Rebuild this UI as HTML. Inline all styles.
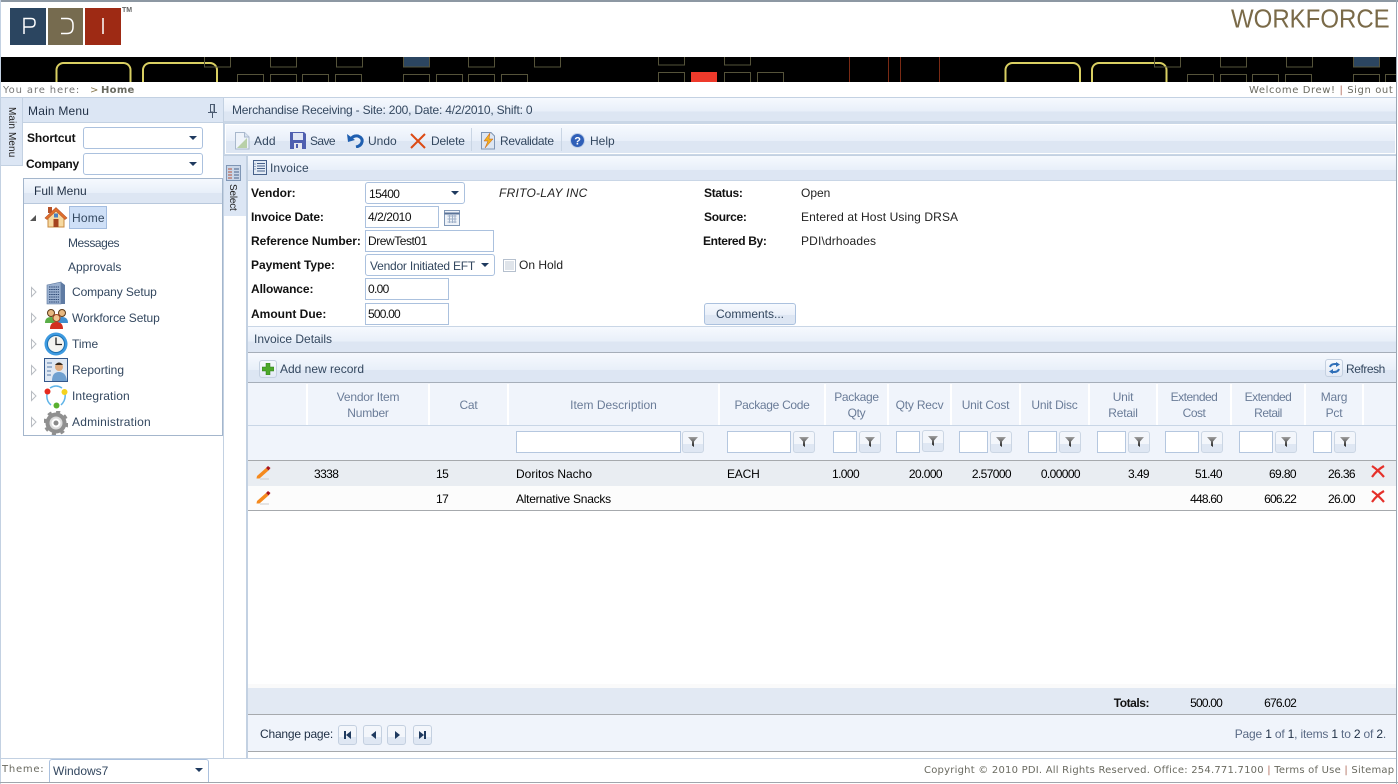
<!DOCTYPE html>
<html><head><meta charset="utf-8"><title>Merchandise Receiving</title>
<style>
html,body{margin:0;padding:0;background:#fff}
body{width:1398px;height:784px;position:relative;overflow:hidden;font:12px/16px "Liberation Sans",sans-serif;color:#000}
div,svg,span.a{position:absolute}
.t{position:absolute;white-space:nowrap;line-height:16px;height:16px}
.b{font-weight:bold;color:#111}
.n{color:#33475f}
.g{color:#5a6a85}
.r{text-align:right}
.m{letter-spacing:-.6px}
.c{text-align:center;color:#6a7c98;line-height:16px;letter-spacing:-.2px}
.bar{background:linear-gradient(#f6f9fe 0,#e8eff9 58%,#dde6f3 58%,#dde6f3 100%)}
.inp{background:#fff;border:1px solid #abc1de;box-sizing:border-box;padding-left:2px;line-height:21px;color:#111;letter-spacing:-.45px}
.sel{background:#fff;border:1px solid #abc1de;border-radius:3px;box-sizing:border-box;padding-left:3px;line-height:22px;color:#33475f}
.sel:after{content:"";position:absolute;right:5px;top:8px;border:4px solid transparent;border-top:4px solid #1f3a5f;border-bottom:0}
.fi{background:#fff;border:1px solid #b5c7df;box-sizing:border-box;height:22px;top:431px}
.fb{border:1px solid #cbd6e4;border-radius:3px;box-sizing:border-box;height:22px;width:22px;top:431px;background:linear-gradient(#f3f6fb 0,#f3f6fb 60%,#dfe7f3 60%)}
.fb:after{content:"";position:absolute;left:5px;top:5px;width:10px;height:10px;background:linear-gradient(#a0a0a0,#222);clip-path:polygon(0 0,100% 0,60% 45%,60% 100%,40% 85%,40% 45%)}
.pb{border:1px solid #c4d0e0;border-radius:3px;box-sizing:border-box;top:725px;height:20px;background:linear-gradient(#f3f6fb 0,#f3f6fb 60%,#dfe7f3 60%)}
.vh{width:2px;top:384px;height:41px;background:#fff}
</style></head><body>

<!-- frame -->
<div style="left:0;top:0;width:1398px;height:2px;background:#8d98a3"></div>
<div style="left:0;top:0;width:1px;height:784px;background:#c3d1e2"></div>
<div style="left:1396px;top:0;width:1px;height:784px;background:#9aa7b5"></div>

<!-- logo -->
<div style="left:10px;top:8px;width:36px;height:37px;background:#2b4560"></div>
<div style="left:48px;top:8px;width:35px;height:37px;background:#766b4f"></div>
<div style="left:85px;top:8px;width:36px;height:37px;background:#9e2a14"></div>
<svg style="left:10px;top:8px" width="111" height="37" fill="none" stroke="#fff" stroke-width="1.500">
<path d="M14 26V10.500H21Q25 10.500 25 14V15Q25 19 21 19H14"/>
<path d="M51 10.500H57Q63 10.500 63 17V19Q63 25.500 57 25.500H51"/>
<path d="M93 10V26"/></svg>
<div class="t" style="left:122px;top:6px;font-size:7px;line-height:9px;height:9px;font-weight:bold;color:#666">TM</div>
<div class="t" style="left:1231px;top:5px;font-size:24px;line-height:28px;height:28px;color:#7a6a48;transform-origin:0 14px;transform:scaleY(1.08) translateY(1px)">WORKFORCE</div>

<!-- banner -->
<svg style="left:1px;top:57px" width="1395" height="25" viewBox="1 57 1395 25">
<rect x="1" y="57" width="1395" height="25" fill="#000"/>
<g fill="none" stroke="#d9cf62" stroke-width="2">
<rect x="56.500" y="63" width="74" height="30" rx="7"/><rect x="143" y="63" width="74" height="30" rx="7"/>
<rect x="1005.500" y="63" width="74.500" height="30" rx="7"/><rect x="1092" y="63" width="74.500" height="30" rx="7"/></g>
<g fill="none" stroke="#55533a">
<rect x="204.500" y="50" width="26" height="17"/><rect x="270.500" y="50" width="26" height="17"/><rect x="336.500" y="50" width="26" height="17"/>
<rect x="237.500" y="74.500" width="26" height="20"/><rect x="270.500" y="74.500" width="26" height="20"/><rect x="302.500" y="74.500" width="26" height="20"/><rect x="335.500" y="74.500" width="26" height="20"/>
<rect x="403.500" y="74.500" width="26" height="20"/><rect x="436.500" y="74.500" width="26" height="20"/>
<rect x="468.500" y="74.500" width="26" height="20"/><rect x="501.500" y="74.500" width="26" height="20"/>
<rect x="468.500" y="50" width="26" height="17"/><rect x="534.500" y="50" width="26" height="17"/>
<rect x="658.500" y="50" width="26" height="15"/><rect x="724.500" y="50" width="26" height="15"/>
<rect x="658.500" y="72.500" width="26" height="20"/><rect x="724.500" y="72.500" width="26" height="20"/><rect x="757.500" y="72.500" width="26" height="20"/>
<rect x="1154.500" y="50" width="26" height="17"/><rect x="1220.500" y="50" width="26" height="17"/><rect x="1286.500" y="50" width="26" height="17"/>
<rect x="1187.500" y="74.500" width="26" height="20"/><rect x="1220.500" y="74.500" width="26" height="20"/><rect x="1252.500" y="74.500" width="26" height="20"/><rect x="1285.500" y="74.500" width="26" height="20"/>
<rect x="1353.500" y="74.500" width="26" height="20"/><rect x="1385.500" y="74.500" width="26" height="20"/>
</g>
<rect x="403.500" y="50" width="26" height="17" fill="#2b4560" stroke="#55533a"/>
<rect x="1353.500" y="50" width="26" height="17" fill="#2b4560" stroke="#55533a"/>
<rect x="691" y="72" width="26" height="12" fill="#ee3a2b"/>
<g stroke="#7a2a14"><path d="M849.500 57V82M888.500 57V82M900.500 57V82M939.500 57V82"/></g>
</svg>

<!-- breadcrumb -->
<div class="t" style="left:3px;top:83px;font:10px/15px 'DejaVu Sans',sans-serif;color:#777;letter-spacing:.88px">You are here:</div>
<div class="t" style="left:90px;top:83px;font:10px/15px 'DejaVu Sans',sans-serif;color:#8a7a50">&gt;</div>
<div class="t" style="left:101px;top:83px;font:bold 10px/15px 'DejaVu Sans',sans-serif;color:#6a6a60;letter-spacing:.3px">Home</div>
<div class="t" style="left:1249px;top:83px;font:10px/15px 'DejaVu Sans',sans-serif;color:#6a6a60;letter-spacing:.6px">Welcome Drew! <span style="color:#b06a5a">|</span> Sign out</div>
<div style="left:1px;top:97px;width:1395px;height:1px;background:#c3d1e2"></div>

<!-- left rail -->
<div style="left:1px;top:98px;width:21px;height:67px;background:#dce6f4;border-right:1px solid #c3d1e2;border-bottom:1px solid #c3d1e2"></div>
<div class="t" style="left:18px;top:107px;transform-origin:0 0;transform:rotate(90deg);font-size:10px;line-height:14px;color:#222;letter-spacing:.1px">Main Menu</div>
<div style="left:23px;top:98px;width:200px;height:25px;background:#dce6f4;border-bottom:1px solid #c3d1e2;box-sizing:border-box"></div>
<div class="t" style="left:28px;top:103px;color:#1f2f45;letter-spacing:.2px">Main Menu</div>
<svg style="left:207px;top:104px" width="11" height="14" fill="none" stroke="#4a5a70"><path d="M3.500 .5H7.500V8H3.500ZM1 8.500H10M5.500 9V14"/><path d="M6.500 1V8" stroke="#9aa8b8"/></svg>
<div class="t b" style="left:27px;top:130px;letter-spacing:-.1px">Shortcut</div>
<div class="sel" style="left:83px;top:127px;width:120px;height:22px"></div>
<div class="t b" style="left:26px;top:156px;letter-spacing:-.25px">Company</div>
<div class="sel" style="left:83px;top:153px;width:120px;height:22px"></div>

<!-- Full menu -->
<div style="left:23px;top:178px;width:200px;height:258px;border:1px solid #a4b6cc;box-sizing:border-box;background:#fff"></div>
<div class="bar" style="left:24px;top:179px;width:198px;height:25px;border-bottom:1px solid #b8c8dc;box-sizing:border-box"></div>
<div class="t" style="left:34px;top:183px;color:#1f2f45">Full Menu</div>
<svg style="left:29px;top:214px" width="8" height="8"><path d="M7 1V7H1Z" fill="#555"/></svg>
<div style="left:69px;top:206px;width:38px;height:23px;background:#cfe0f7;border:1px solid #a3bcdf;box-sizing:border-box"></div>
<div class="t n" style="left:72px;top:210px;letter-spacing:.2px">Home</div>
<div class="t n" style="left:68px;top:235px;letter-spacing:-.45px">Messages</div>
<div class="t n" style="left:68px;top:259px">Approvals</div>
<div class="t n" style="left:72px;top:284px;letter-spacing:-.1px">Company Setup</div>
<div class="t n" style="left:72px;top:310px;letter-spacing:-.1px">Workforce Setup</div>
<div class="t n" style="left:72px;top:336px">Time</div>
<div class="t n" style="left:72px;top:362px">Reporting</div>
<div class="t n" style="left:72px;top:388px;letter-spacing:.1px">Integration</div>
<div class="t n" style="left:72px;top:414px;letter-spacing:.2px">Administration</div>
<svg style="left:30px;top:285px" width="8" height="150" fill="#fff" stroke="#b8bcc2"><path d="M1.500 2.500L6 7L1.500 11.500Z"/><path d="M1.500 28.500L6 33L1.500 37.500Z"/><path d="M1.500 54.500L6 59L1.500 63.500Z"/><path d="M1.500 80.500L6 85L1.500 89.500Z"/><path d="M1.500 106.500L6 111L1.500 115.500Z"/><path d="M1.500 132.500L6 137L1.500 141.500Z"/></svg>

<!-- tree icons -->
<svg style="left:44px;top:206px" width="24" height="23" viewBox="0 0 24 23"><rect x="4" y="1" width="4" height="6" fill="#b5532a"/><path d="M4 11L12 4L20 11V21H4Z" fill="#f6d9a0" stroke="#c88a40"/><path d="M1 12L12 1.500L23 12L21 13.500L12 5L3 13.500Z" fill="#e2702a" stroke="#b5532a" stroke-width=".6"/><rect x="9.500" y="13" width="5" height="8" fill="#a5431e"/><rect x="10" y="7.500" width="4" height="4" fill="#4a82c4"/></svg>
<svg style="left:46px;top:281px" width="20" height="24" viewBox="0 0 20 24"><path d="M1 4L15 1V23H1Z" fill="#9ab0cf" stroke="#56729a" stroke-width=".6"/><path d="M15 1L19 4V23H15Z" fill="#5f7ba3"/><path d="M3 6H13M3 8.500H13M3 11H13M3 13.500H13M3 16H13M3 18.500H13M3 21H13" stroke="#2f4a75" stroke-dasharray="1.500 .7"/></svg>
<svg style="left:44px;top:308px" width="25" height="21" viewBox="0 0 25 21"><circle cx="7" cy="5" r="3.500" fill="#e8b880" stroke="#5a3a1a"/><path d="M1 15Q1 9 7 9Q12 9 12 15Z" fill="#5aae48"/><circle cx="18" cy="5" r="3.500" fill="#e8b880" stroke="#5a3a1a"/><path d="M13 15Q13 9 18 9Q24 9 24 15Z" fill="#3f8fd0"/><circle cx="12.500" cy="10" r="3.500" fill="#f0c490" stroke="#a5431e"/><path d="M6 21Q6 14 12.500 14Q19 14 19 21Z" fill="#d32f1e"/></svg>
<svg style="left:44px;top:332px" width="24" height="24" viewBox="0 0 24 24"><circle cx="12" cy="12" r="11.500" fill="#3d9ae0"/><circle cx="12" cy="12" r="8.500" fill="#f4f4f0" stroke="#1b6fb0"/><path d="M12 5.500V12.500H18" stroke="#222" stroke-width="1.300" fill="none"/></svg>
<svg style="left:44px;top:358px" width="24" height="24" viewBox="0 0 24 24"><rect x=".5" y=".5" width="23" height="23" fill="#dfe8f3" stroke="#33578a"/><path d="M3 5H8M3 9H8M3 13H7M3 17H7" stroke="#5a7ba8"/><circle cx="15" cy="9" r="4" fill="#e0ac80"/><path d="M11 7Q15 2 19 7Z" fill="#3a2a1a"/><path d="M8 23Q8 14 15 14Q22 14 23 23Z" fill="#6fa0d0"/></svg>
<svg style="left:44px;top:384px" width="24" height="25" viewBox="0 0 24 25"><path d="M6 4Q12 0 18 4M21 10Q22 16 17 21M7 21Q2 17 3 10" fill="none" stroke="#5fb4e8" stroke-width="1.500"/><circle cx="3.500" cy="7.500" r="3" fill="#e62a1e"/><circle cx="20.500" cy="8" r="3" fill="#f4d21e"/><circle cx="12.500" cy="21.500" r="3" fill="#5ab030"/></svg>
<svg style="left:44px;top:411px" width="24" height="24" viewBox="0 0 24 24"><circle cx="12" cy="12" r="8" fill="none" stroke="#8f8f8f" stroke-width="5"/><circle cx="12" cy="12" r="11" fill="none" stroke="#8f8f8f" stroke-width="3" stroke-dasharray="4 4.600"/><circle cx="12" cy="12" r="5.500" fill="none" stroke="#dcdcdc" stroke-width="2"/><circle cx="12" cy="12" r="2.500" fill="#8a8a8a"/></svg>

<!-- dividers -->
<div style="left:223px;top:98px;width:1px;height:660px;background:#c3d1e2"></div>
<div style="left:246px;top:156px;width:2px;height:602px;background:#c3d1e2"></div>
<div style="left:224px;top:156px;width:22px;height:60px;background:#dce6f4"></div>
<svg style="left:226px;top:165px" width="15" height="16"><rect x=".5" y=".5" width="14" height="15" fill="#c9d6e8" stroke="#7f96b5"/><path d="M2 4H6M2 7H6M2 10H6M2 13H6" stroke="#b5533a"/><path d="M8 4H13M8 7H13M8 10H13M8 13H13" stroke="#47618a"/></svg>
<div class="t" style="left:239px;top:184px;transform-origin:0 0;transform:rotate(90deg);font-size:10px;color:#222;line-height:14px;letter-spacing:-.2px">Select</div>

<!-- title -->
<div class="bar" style="left:224px;top:98px;width:1172px;height:24px;border-bottom:1px solid #c9d6e6;box-sizing:border-box"></div>
<div class="t" style="left:232px;top:102px;color:#33475f;letter-spacing:-.2px">Merchandise Receiving - Site: 200, Date: 4/2/2010, Shift: 0</div>
<!-- toolbar -->
<div style="left:224px;top:122px;width:1172px;height:33px;background:#c9d6e6"></div>
<div class="bar" style="left:225px;top:124px;width:1171px;height:30px;border:1px solid #fff;box-sizing:border-box"></div>
<svg style="left:235px;top:132px" width="15" height="18"><path d="M.5 .5H9.500L14 5V17H.5Z" fill="#eef3fa" stroke="#a8b8cc"/><path d="M2 16L12 6V16Z" fill="#b8d0a8"/><path d="M9.500 .5V5H14" fill="#d8e2f0" stroke="#a8b8cc"/></svg>
<div class="t n" style="left:254px;top:133px;letter-spacing:.1px">Add</div>
<svg style="left:290px;top:132px" width="16" height="17"><path d="M0 0H14L16 2V17H0Z" fill="#4f5fb0"/><rect x="3" y="1" width="10" height="7" fill="#dfe5f5"/><rect x="4" y="11" width="8" height="6" fill="#e8e8f0"/><rect x="6" y="12" width="2" height="4" fill="#4f5fb0"/></svg>
<div class="t n" style="left:310px;top:133px;letter-spacing:-.6px">Save</div>
<svg style="left:347px;top:133px" width="17" height="15" fill="none"><path d="M3 7Q6 2 11 3Q16 5 15 9Q14 13 9 14" stroke="#1f5fb0" stroke-width="3"/><path d="M0 1L1 9L8 7Z" fill="#1f5fb0"/></svg>
<div class="t n" style="left:368px;top:133px">Undo</div>
<svg style="left:410px;top:133px" width="16" height="16" stroke="#dc4a14" stroke-width="2"><path d="M1 1L15 15M15 1L1 15"/></svg>
<div class="t n" style="left:431px;top:133px;letter-spacing:-.15px">Delete</div>
<div style="left:471px;top:128px;width:1px;height:23px;background:#c9d5e4"></div>
<svg style="left:481px;top:132px" width="14" height="18"><path d="M.5 .5H10L13.500 4V17H.5Z" fill="#dde6f2" stroke="#7f96b5"/><path d="M9 1L3 9H7L4 16L12 7H8Z" fill="#f0b020" stroke="#c85a10" stroke-width=".5"/></svg>
<div class="t n" style="left:500px;top:133px;letter-spacing:-.3px">Revalidate</div>
<div style="left:561px;top:128px;width:1px;height:23px;background:#c9d5e4"></div>
<svg style="left:570px;top:133px" width="15" height="15"><circle cx="7.500" cy="7.500" r="7" fill="#2f5fb8" stroke="#c0d0e8"/><text x="4.300" y="11.500" font-family="Liberation Sans" font-weight="bold" font-size="11" fill="#fff">?</text></svg>
<div class="t n" style="left:590px;top:133px">Help</div>

<!-- invoice bar -->
<div style="left:224px;top:155px;width:1172px;height:1px;background:#c3d1e2"></div>
<div class="bar" style="left:248px;top:156px;width:1148px;height:25px;border-bottom:1px solid #c9d6e6;box-sizing:border-box"></div>
<svg style="left:253px;top:160px" width="14" height="15" fill="none" stroke="#47618a"><rect x=".5" y=".5" width="13" height="14" fill="#e3ebf5"/><path d="M4 3.500H12M4 6H12M4 8.500H12M4 11H12"/><path d="M2 3.500V11" stroke-dasharray="1 1.500"/></svg>
<div class="t" style="left:270px;top:160px;color:#33475f;letter-spacing:.1px">Invoice</div>

<!-- form -->
<div class="t b" style="left:251px;top:185px">Vendor:</div>
<div class="t b" style="left:251px;top:209px;letter-spacing:-.15px">Invoice Date:</div>
<div class="t b" style="left:251px;top:233px;letter-spacing:-.05px">Reference Number:</div>
<div class="t b" style="left:251px;top:257px;letter-spacing:-.05px">Payment Type:</div>
<div class="t b" style="left:251px;top:281px;letter-spacing:-.1px">Allowance:</div>
<div class="t b" style="left:251px;top:306px">Amount Due:</div>
<div class="sel" style="left:365px;top:182px;width:100px;height:22px;color:#111;letter-spacing:-.6px">15400</div>
<div class="t" style="left:499px;top:185px;font-style:italic;color:#222;letter-spacing:.25px">FRITO-LAY INC</div>
<div class="inp" style="left:365px;top:206px;width:74px;height:22px">4/2/2010</div>
<svg style="left:444px;top:210px" width="16" height="16" fill="none" stroke="#7f96b5"><rect x=".5" y=".5" width="15" height="15" fill="#eef2f8"/><path d="M.5 3.500H15.500" stroke="#5a7398" stroke-width="2"/><path d="M3.500 6H12.500M3.500 9H12.500M3.500 12H12.500M5.500 5V13M8.500 5V13M11 5V13" stroke="#9fb0c8"/></svg>
<div class="inp" style="left:365px;top:230px;width:129px;height:22px">DrewTest01</div>
<div class="sel" style="left:365px;top:254px;width:130px;height:22px;letter-spacing:-.22px;padding-left:4px">Vendor Initiated EFT</div>
<div style="left:503px;top:259px;width:13px;height:13px;border:1px solid #b5c0ce;box-sizing:border-box;background:#dfe4ea;box-shadow:inset 0 0 0 1px #fff"></div>
<div class="t" style="left:519px;top:257px;color:#222">On Hold</div>
<div class="inp" style="left:365px;top:278px;width:84px;height:22px;letter-spacing:-.7px">0.00</div>
<div class="inp" style="left:365px;top:303px;width:84px;height:22px;letter-spacing:-.8px">500.00</div>
<div class="t b" style="left:704px;top:185px;letter-spacing:-.3px">Status:</div>
<div class="t b" style="left:704px;top:209px;letter-spacing:-.3px">Source:</div>
<div class="t b" style="left:703px;top:233px;letter-spacing:-.35px">Entered By:</div>
<div class="t" style="left:801px;top:185px;color:#222">Open</div>
<div class="t" style="left:801px;top:209px;color:#222;letter-spacing:.12px">Entered at Host Using DRSA</div>
<div class="t" style="left:801px;top:233px;color:#222;letter-spacing:.15px">PDI\drhoades</div>
<div style="left:704px;top:303px;width:92px;height:22px;border:1px solid #abc1de;border-radius:3px;box-sizing:border-box;background:linear-gradient(#f6f9fe 0,#eaf0f9 55%,#dde6f3 55%);text-align:center;line-height:20px;color:#33475f">Comments...</div>

<!-- details header -->
<div class="bar" style="left:248px;top:327px;width:1148px;height:25px"></div>
<div style="left:248px;top:326px;width:1148px;height:1px;background:#c9d6e6"></div>
<div class="t" style="left:254px;top:331px;color:#33475f">Invoice Details</div>
<div style="left:248px;top:352px;width:1148px;height:1px;background:#a6aeb9"></div>
<div class="bar" style="left:248px;top:353px;width:1148px;height:29px"></div>
<div style="left:259px;top:360px;width:18px;height:18px;border:1px solid #c4d0e0;border-radius:3px;box-sizing:border-box;background:linear-gradient(#f6f9fe,#e3eaf5)"></div>
<svg style="left:262px;top:363px" width="12" height="12"><path d="M4 0H8V4H12V8H8V12H4V8H0V4H4Z" fill="#4ca82a" stroke="#2f7a18" stroke-width=".5"/></svg>
<div class="t n" style="left:280px;top:361px">Add new record</div>
<div style="left:1325px;top:359px;width:18px;height:18px;border:1px solid #c4d0e0;border-radius:3px;box-sizing:border-box;background:linear-gradient(#f6f9fe,#e3eaf5)"></div>
<svg style="left:1329px;top:362px" width="11" height="12" fill="none" stroke="#2f6fb8" stroke-width="2"><path d="M1 5Q2 2 6 2H9M10 7Q9 10 5 10H2"/><path d="M7 0L11 2.500L7 5Z" fill="#2f6fb8" stroke="none"/><path d="M4 7L0 9.500L4 12Z" fill="#2f6fb8" stroke="none"/></svg>
<div class="t n" style="left:1346px;top:361px;letter-spacing:-.45px">Refresh</div>
<div style="left:248px;top:382px;width:1148px;height:1px;background:#a6aeb9"></div>

<!-- grid header -->
<div style="left:248px;top:383px;width:1148px;height:77px;background:#f0f4fb"></div>
<div style="left:248px;top:425px;width:1148px;height:1px;background:#c9d6e6"></div>
<div class="vh" style="left:306px"></div><div class="vh" style="left:428px"></div><div class="vh" style="left:507px"></div><div class="vh" style="left:718px"></div><div class="vh" style="left:824px"></div><div class="vh" style="left:887px"></div><div class="vh" style="left:950px"></div><div class="vh" style="left:1019px"></div><div class="vh" style="left:1088px"></div><div class="vh" style="left:1156px"></div><div class="vh" style="left:1230px"></div><div class="vh" style="left:1304px"></div><div class="vh" style="left:1362px"></div>
<div class="c" style="left:308px;top:389px;width:120px">Vendor Item<br>Number</div>
<div class="c" style="left:430px;top:397px;width:77px">Cat</div>
<div class="c" style="left:509px;top:397px;width:209px;letter-spacing:0">Item Description</div>
<div class="c" style="left:720px;top:397px;width:104px;letter-spacing:-.3px">Package Code</div>
<div class="c" style="left:826px;top:389px;width:61px;letter-spacing:-.3px">Package<br>Qty</div>
<div class="c" style="left:889px;top:397px;width:61px">Qty Recv</div>
<div class="c" style="left:952px;top:397px;width:67px">Unit Cost</div>
<div class="c" style="left:1021px;top:397px;width:67px">Unit Disc</div>
<div class="c" style="left:1090px;top:389px;width:66px">Unit<br>Retail</div>
<div class="c" style="left:1158px;top:389px;width:72px;letter-spacing:-.5px">Extended<br>Cost</div>
<div class="c" style="left:1232px;top:389px;width:72px;letter-spacing:-.5px">Extended<br>Retail</div>
<div class="c" style="left:1306px;top:389px;width:56px">Marg<br>Pct</div>

<!-- filters -->
<div class="fi" style="left:516px;width:165px"></div><div class="fb" style="left:682px"></div>
<div class="fi" style="left:727px;width:64px"></div><div class="fb" style="left:793px"></div>
<div class="fi" style="left:833px;width:24px"></div><div class="fb" style="left:859px"></div>
<div class="fi" style="left:896px;width:24px"></div><div class="fb" style="left:922px;top:430px"></div>
<div class="fi" style="left:959px;width:29px"></div><div class="fb" style="left:990px"></div>
<div class="fi" style="left:1028px;width:29px"></div><div class="fb" style="left:1059px"></div>
<div class="fi" style="left:1097px;width:29px"></div><div class="fb" style="left:1128px"></div>
<div class="fi" style="left:1165px;width:34px"></div><div class="fb" style="left:1201px"></div>
<div class="fi" style="left:1239px;width:34px"></div><div class="fb" style="left:1275px"></div>
<div class="fi" style="left:1313px;width:19px"></div><div class="fb" style="left:1334px"></div>

<!-- rows -->
<div style="left:248px;top:460px;width:1148px;height:1px;background:#a6a9ad"></div>
<div style="left:248px;top:461px;width:1148px;height:25px;background:#e9edf2"></div>
<div style="left:248px;top:486px;width:1148px;height:24px;background:#fcfcfc"></div>
<div style="left:248px;top:510px;width:1148px;height:1px;background:#a6a9ad"></div>
<svg style="left:256px;top:465px" width="15" height="15"><path d="M1 11L10 3L12.500 5.500L3.500 13.500L.5 13.500Z" fill="#f58a1e"/><path d="M10 3L12 1L14.500 3L12.500 5.500Z" fill="#a8141e"/><path d="M4 14H13" stroke="#ccc"/></svg>
<svg style="left:256px;top:490px" width="15" height="15"><path d="M1 11L10 3L12.500 5.500L3.500 13.500L.5 13.500Z" fill="#f58a1e"/><path d="M10 3L12 1L14.500 3L12.500 5.500Z" fill="#a8141e"/><path d="M4 14H13" stroke="#ccc"/></svg>
<svg style="left:1371px;top:465px" width="14" height="13" stroke="#e5302a" stroke-width="2.200" fill="none"><path d="M1 1Q7 5 13 12M13 1Q6 5 1 12"/></svg>
<svg style="left:1371px;top:490px" width="14" height="13" stroke="#e5302a" stroke-width="2.200" fill="none"><path d="M1 1Q7 5 13 12M13 1Q6 5 1 12"/></svg>
<div class="t m" style="left:314px;top:466px">3338</div>
<div class="t m" style="left:436px;top:466px">15</div>
<div class="t" style="left:516px;top:466px">Doritos Nacho</div>
<div class="t" style="left:727px;top:466px;letter-spacing:-.2px">EACH</div>
<div class="t m" style="left:832px;top:466px">1.000</div>
<div class="t r m" style="left:882px;top:466px;width:60px">20.000</div>
<div class="t r m" style="left:951px;top:466px;width:60px">2.57000</div>
<div class="t r m" style="left:1020px;top:466px;width:60px">0.00000</div>
<div class="t r m" style="left:1089px;top:466px;width:60px">3.49</div>
<div class="t r m" style="left:1162px;top:466px;width:60px">51.40</div>
<div class="t r m" style="left:1236px;top:466px;width:60px">69.80</div>
<div class="t r m" style="left:1295px;top:466px;width:60px">26.36</div>
<div class="t m" style="left:436px;top:491px">17</div>
<div class="t" style="left:516px;top:491px;letter-spacing:-.25px">Alternative Snacks</div>
<div class="t r m" style="left:1162px;top:491px;width:60px;letter-spacing:-.8px">448.60</div>
<div class="t r m" style="left:1236px;top:491px;width:60px;letter-spacing:-.8px">606.22</div>
<div class="t r m" style="left:1295px;top:491px;width:60px">26.00</div>

<!-- totals -->
<div style="left:248px;top:688px;width:1148px;height:26px;background:#e2e9f3"></div>
<div style="left:248px;top:684px;width:1148px;height:4px;background:#fafafa"></div>
<div style="left:248px;top:714px;width:1148px;height:1px;background:#a6a9ad"></div>
<div class="t b r" style="left:1089px;top:695px;width:60px;letter-spacing:-.45px">Totals:</div>
<div class="t r" style="left:1162px;top:695px;width:60px;letter-spacing:-.8px">500.00</div>
<div class="t r" style="left:1236px;top:695px;width:60px;letter-spacing:-.8px">676.02</div>

<!-- pager -->
<div style="left:248px;top:715px;width:1148px;height:36px;background:#f0f4fb"></div>
<div style="left:248px;top:751px;width:1148px;height:1px;background:#a6a9ad"></div>
<div class="t" style="left:260px;top:726px;color:#1f2f45;letter-spacing:-.2px">Change page:</div>
<div class="pb" style="left:338px;width:19px"></div><div class="pb" style="left:363px;width:19px"></div><div class="pb" style="left:387px;width:19px"></div><div class="pb" style="left:413px;width:19px"></div>
<svg style="left:338px;top:725px" width="95" height="20" fill="#1f3a5f"><path d="M6 6H8V14H6ZM13 6V14L8 10Z"/><path d="M38 6V14L33 10Z"/><path d="M57 6V14L62 10Z"/><path d="M81 6V14L86 10ZM86 6H88V14H86Z"/></svg>
<div class="t" style="right:12px;top:726px;color:#5a6a85;letter-spacing:-.18px">Page <span style="color:#1f2f45">1</span> of <span style="color:#1f2f45">1</span>, items <span style="color:#1f2f45">1</span> to <span style="color:#1f2f45">2</span> of <span style="color:#1f2f45">2</span>.</div>

<!-- footer -->
<div style="left:1px;top:758px;width:1395px;height:1px;background:#c3d1e2"></div>
<div style="left:0;top:782px;width:1398px;height:1px;background:#a0a6ac"></div>
<div class="t" style="left:2px;top:762px;font:10px/15px 'DejaVu Sans',sans-serif;color:#6a6a60;letter-spacing:.75px">Theme:</div>
<div class="sel" style="left:49px;top:759px;width:160px;height:23px;border-radius:3px 3px 0 0;border-bottom:0">Windows7</div>
<div class="t" style="left:924px;top:763px;font:10px/15px 'DejaVu Sans',sans-serif;color:#6a6a60;letter-spacing:.22px">Copyright © 2010 PDI. All Rights Reserved. Office: 254.771.7100 <span style="color:#b06a5a">|</span> Terms of Use <span style="color:#b06a5a">|</span> Sitemap</div>
</body></html>
